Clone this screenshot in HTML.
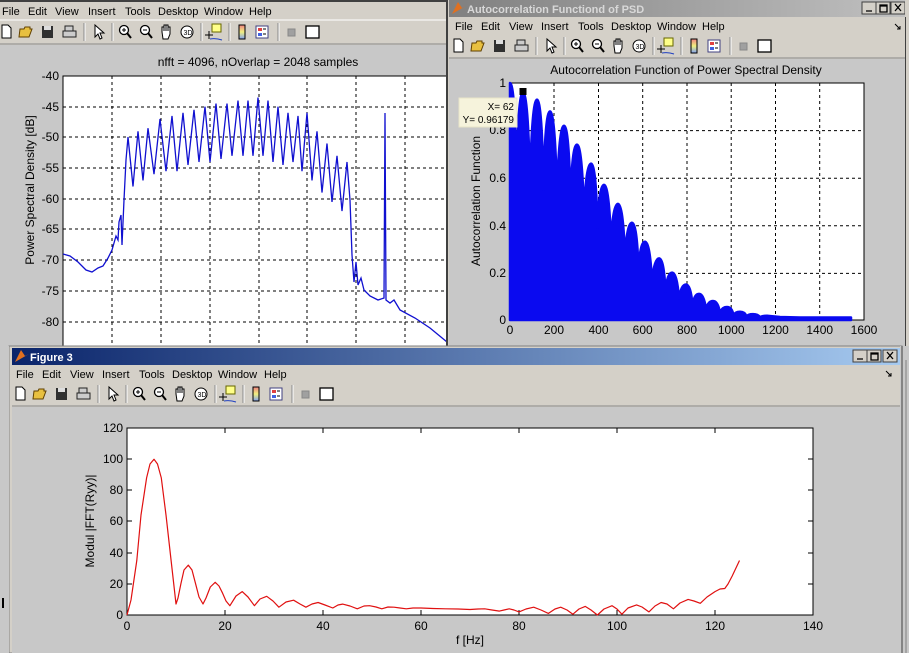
<!DOCTYPE html>
<html><head><meta charset="utf-8"><style>
html,body{margin:0;padding:0;width:909px;height:653px;overflow:hidden;background:#d4d0c8}
svg{display:block}
text{font-family:"Liberation Sans",sans-serif}
</style></head><body>
<svg width="909" height="653" viewBox="0 0 909 653" xmlns="http://www.w3.org/2000/svg">
<defs>
<linearGradient id="act" x1="0" x2="1"><stop offset="0" stop-color="#0a246a"/><stop offset="1" stop-color="#a6caf0"/></linearGradient>
<linearGradient id="ina" x1="0" x2="1"><stop offset="0" stop-color="#808080"/><stop offset="1" stop-color="#c0c0c0"/></linearGradient>
<linearGradient id="cb" x1="0" y1="0" x2="0" y2="1"><stop offset="0" stop-color="#f08080"/><stop offset=".5" stop-color="#f0f080"/><stop offset="1" stop-color="#80a0f0"/></linearGradient>
<g id="tb">
 <path d="M2,-7h6l3,3v10h-9z" fill="#fff" stroke="#000"/>
 <path d="M20,-3h4l1,-2h5v2h2l-3,8h-10z" fill="#e8c040" stroke="#604000"/>
 <rect x="42" y="-6" width="11" height="12" fill="#303030"/><rect x="44" y="-6" width="7" height="4" fill="#ddd"/>
 <path d="M63,-1h13v6h-13z M65,-6h8v5h-8z" fill="#ccc" stroke="#222"/>
 <line x1="84" y1="-9" x2="84" y2="9" stroke="#888"/><line x1="85" y1="-9" x2="85" y2="9" stroke="#fff"/>
 <path d="M95,-7v12l3,-3l2,5l2,-1l-2,-5h4z" fill="#fff" stroke="#000"/>
 <line x1="112" y1="-9" x2="112" y2="9" stroke="#888"/><line x1="113" y1="-9" x2="113" y2="9" stroke="#fff"/>
 <circle cx="124" cy="-2" r="4.5" fill="#fff" stroke="#000" stroke-width="1.3"/><path d="M122,-2h4M124,-4v4" stroke="#000"/><line x1="127" y1="1" x2="131" y2="6" stroke="#000" stroke-width="2"/>
 <circle cx="145" cy="-2" r="4.5" fill="#fff" stroke="#000" stroke-width="1.3"/><path d="M143,-2h4" stroke="#000"/><line x1="148" y1="1" x2="152" y2="6" stroke="#000" stroke-width="2"/>
 <path d="M162,0v-5h2v4v-6h2v6v-6h2v6v-4h2v7l-2,5h-5z" fill="#fff" stroke="#000"/>
 <circle cx="187" cy="0" r="6" fill="#fff" stroke="#000"/><text x="183.5" y="3" font-size="7">3D</text>
 <line x1="201" y1="-9" x2="201" y2="9" stroke="#888"/><line x1="202" y1="-9" x2="202" y2="9" stroke="#fff"/>
 <rect x="212" y="-8" width="9" height="8" fill="#ff8" stroke="#660"/><path d="M205,3h8M209,-1v8" stroke="#000"/><path d="M210,7q6,-1 12,1" stroke="#2040c0" fill="none"/>
 <line x1="229" y1="-9" x2="229" y2="9" stroke="#888"/><line x1="230" y1="-9" x2="230" y2="9" stroke="#fff"/>
 <rect x="239" y="-7" width="6" height="14" fill="url(#cb)" stroke="#000"/>
 <rect x="256" y="-6" width="12" height="12" fill="#fff" stroke="#404080"/><rect x="258" y="-4" width="4" height="3" fill="#e04040"/><rect x="258" y="1" width="4" height="3" fill="#4060e0"/><path d="M263,-3h3M263,2h3" stroke="#000"/>
 <line x1="278" y1="-9" x2="278" y2="9" stroke="#888"/><line x1="279" y1="-9" x2="279" y2="9" stroke="#fff"/>
 <rect x="288" y="-3" width="7" height="7" fill="#a0a0a0" stroke="#888"/>
 <rect x="306" y="-6" width="13" height="12" fill="#fff" stroke="#000" stroke-width="1.3"/>
</g>
</defs>

<!-- ============ WINDOW 1 ============ -->
<rect x="0" y="0" width="448" height="653" fill="#d4d0c8"/>
<rect x="0" y="0" width="448" height="2" fill="#404040"/>
<g font-size="11" fill="#000">
<text x="2" y="15">File</text><text x="28" y="15">Edit</text><text x="55" y="15">View</text><text x="88" y="15">Insert</text><text x="125" y="15">Tools</text><text x="158" y="15">Desktop</text><text x="204" y="15">Window</text><text x="249" y="15">Help</text>
</g>
<line x1="0" y1="20" x2="448" y2="20" stroke="#fff"/>
<use href="#tb" x="0" y="32"/>
<line x1="0" y1="44" x2="448" y2="44" stroke="#888"/>
<rect x="0" y="45" width="446" height="608" fill="#c8c8c8"/>
<text x="258" y="66" font-size="12" text-anchor="middle">nfft = 4096, nOverlap = 2048 samples</text>
<rect x="63" y="76" width="390" height="290" fill="#fff" stroke="#000"/>
<g stroke="#000" stroke-dasharray="3,3" stroke-width="1">
<path d="M112,76V360M161,76V360M210,76V360M259,76V360M307,76V360M356,76V360M405,76V360"/>
<path d="M63,107H447M63,137H447M63,168H447M63,199H447M63,229H447M63,260H447M63,291H447M63,322H447"/>
</g>
<g font-size="12" text-anchor="end">
<text x="59" y="80">-40</text><text x="59" y="111">-45</text><text x="59" y="141">-50</text><text x="59" y="172">-55</text><text x="59" y="203">-60</text><text x="59" y="233">-65</text><text x="59" y="264">-70</text><text x="59" y="295">-75</text><text x="59" y="326">-80</text>
</g>
<text transform="translate(34,190) rotate(-90)" font-size="12" text-anchor="middle">Power Spectral Density [dB]</text>
<polyline fill="none" stroke="#1010d0" stroke-width="1.3" points="63,254 70,256 78,262 86,270 92,272 98,268 103,266 108,258 112,250 116,236 118,240 119,222 121,215 122,245 124,200 126,160 128,137 133,186.5 138,131.3 143,180.4 148,128.2 154,174.2 160,119 166,171.2 172,115.9 177,171.2 183,112.8 188,165 194,109.8 199,162 205,106.7 210,162 216,103.6 221,158.9 227,103.6 232,155.8 238,100.6 243,155.8 248,100.6 253,155.8 258,97.5 263,155.8 268,100.6 273,162 278,106.7 283,165 288,112.8 293,162 298,115.9 302,171.2 307,112.8 312,180.4 317,131.3 322,192.6 327,143.5 332,201.9 337,155.8 342,211.1 347,162 350,200 352,255 354,282 356,262 358,285 361,278 364,290 370,296 378,300 384,298 385,113 386,300 390,303 394,300 400,310 415,318 430,328 447,342"/>
<rect x="446" y="0" width="2" height="653" fill="#404040"/>

<!-- ============ WINDOW 2 ============ -->
<rect x="448" y="0" width="461" height="653" fill="#d4d0c8"/>
<rect x="449" y="0" width="456" height="17" fill="url(#ina)"/>
<path d="M452,14l6,-12l4,6l4,-2z" fill="#e07020"/>
<text x="467" y="13" font-size="11" font-weight="bold" fill="#d8d8d8">Autocorrelation Functiond of PSD</text>
<g fill="#d4d0c8" stroke="#404040"><rect x="862" y="2" width="14" height="12"/><rect x="876" y="2" width="14" height="12"/><rect x="891" y="2" width="14" height="12"/></g>
<path d="M866,11h6M880,5h7v7h-7zM880,6h7M895,4l6,7M901,4l-6,7" stroke="#000" fill="none" stroke-width="1.3"/>
<g font-size="11">
<text x="455" y="30">File</text><text x="481" y="30">Edit</text><text x="509" y="30">View</text><text x="541" y="30">Insert</text><text x="578" y="30">Tools</text><text x="611" y="30">Desktop</text><text x="657" y="30">Window</text><text x="702" y="30">Help</text>
</g>
<path d="M895,24l5,5M897,29h3v-3" stroke="#000" fill="none"/>
<use href="#tb" x="452" y="46"/>
<line x1="449" y1="58" x2="905" y2="58" stroke="#888"/>
<rect x="449" y="59" width="456" height="594" fill="#c8c8c8"/>
<text x="686" y="74" font-size="12" text-anchor="middle">Autocorrelation Function of Power Spectral Density</text>
<rect x="510" y="83" width="354" height="237" fill="#fff" stroke="#000"/>
<g stroke="#000" stroke-dasharray="3,3">
<path d="M554,83V320M598.5,83V320M642.7,83V320M687,83V320M731.2,83V320M775.5,83V320M819.7,83V320"/>
<path d="M510,130.6H864M510,178.2H864M510,225.8H864M510,273.4H864"/>
</g>
<path fill="#0a0af0" stroke="#0a0af0" stroke-width="2.5" stroke-linejoin="round" d="M510,320 L510,83 Q515,83 516.5,177.8 Q518,92.5 523,92.5 Q528,92.5 530,182.5 Q532,99.6 537,99.6 Q542,99.6 543.5,189.6 Q545,111.4 550,111.4 Q555,111.4 557,194.4 Q559,125.7 564,125.7 Q569,125.7 570.5,201.5 Q572,144.6 577,144.6 Q582,144.6 584,213.4 Q586,163.6 591,163.6 Q596,163.6 597.5,227.6 Q599,184.9 604,184.9 Q609,184.9 611,241.8 Q613,203.9 618,203.9 Q623,203.9 625,256 Q627,222.8 632,222.8 Q637,222.8 638.5,270.2 Q640,241.8 645,241.8 Q650,241.8 652,282.1 Q654,258.4 659,258.4 Q664,258.4 665.5,291.6 Q667,272.6 672,272.6 Q677,272.6 679,298.7 Q681,284.5 686,284.5 Q691,284.5 692.5,305.8 Q694,293.9 699,293.9 Q704,293.9 706,309.3 Q708,301 713,301 Q718,301 720,312.9 Q722,307 727,307 Q732,307 733.5,315.3 Q735,311.7 740,311.7 Q745,311.7 746.5,316.4 Q748,314.1 753,314.1 Q758,314.1 760,317.2 Q762,315.7 767,315.7 L780,317 L800,317.5 L851,317.5 L851,320 Z"/>
<g font-size="12" text-anchor="end">
<text x="506" y="87">1</text><text x="506" y="134">0.8</text><text x="506" y="182">0.6</text><text x="506" y="230">0.4</text><text x="506" y="277">0.2</text><text x="506" y="324">0</text>
</g>
<g font-size="12" text-anchor="middle">
<text x="510" y="334">0</text><text x="554" y="334">200</text><text x="598.5" y="334">400</text><text x="642.7" y="334">600</text><text x="687" y="334">800</text><text x="731.2" y="334">1000</text><text x="775.5" y="334">1200</text><text x="819.7" y="334">1400</text><text x="864" y="334">1600</text>
</g>
<text transform="translate(480,201) rotate(-90)" font-size="12" text-anchor="middle">Autocorrelation Function</text>
<rect x="459" y="98" width="58" height="29" fill="#f6f3dc" stroke="#e8e4c8"/>
<g font-size="10" text-anchor="end"><text x="514" y="110">X= 62</text><text x="514" y="123">Y= 0.96179</text></g>
<rect x="519.5" y="88" width="7" height="7" fill="#000"/>
<rect x="905" y="0" width="4" height="653" fill="#d4d0c8"/><line x1="905.5" y1="17" x2="905.5" y2="653" stroke="#404040"/>

<!-- ============ WINDOW 3 ============ -->
<rect x="9" y="346" width="893" height="307" fill="#d4d0c8" stroke="#808080"/>
<rect x="12" y="348" width="888" height="17" fill="url(#act)"/>
<path d="M15,362l6,-12l4,6l4,-2z" fill="#e07020"/>
<text x="30" y="361" font-size="11" font-weight="bold" fill="#fff">Figure 3</text>
<g fill="#d4d0c8" stroke="#404040"><rect x="853" y="350" width="14" height="12"/><rect x="867" y="350" width="14" height="12"/><rect x="883" y="350" width="14" height="12"/></g>
<path d="M857,359h6M871,353h7v7h-7zM871,354h7M887,352l6,7M893,352l-6,7" stroke="#000" fill="none" stroke-width="1.3"/>
<g font-size="11">
<text x="16" y="378">File</text><text x="42" y="378">Edit</text><text x="70" y="378">View</text><text x="102" y="378">Insert</text><text x="139" y="378">Tools</text><text x="172" y="378">Desktop</text><text x="218" y="378">Window</text><text x="264" y="378">Help</text>
</g>
<path d="M886,371l5,5M888,376h3v-3" stroke="#000" fill="none"/>
<use href="#tb" x="14" y="394"/>
<line x1="12" y1="406" x2="900" y2="406" stroke="#888"/>
<rect x="12" y="407" width="888" height="246" fill="#c8c8c8"/>
<rect x="127" y="428" width="686" height="187" fill="#fff" stroke="#000"/>
<g stroke="#000">
<path d="M225,615v-5M323,615v-5M421,615v-5M519,615v-5M617,615v-5M715,615v-5"/>
<path d="M225,428v5M323,428v5M421,428v5M519,428v5M617,428v5M715,428v5"/>
<path d="M127,584h5M127,553h5M127,521h5M127,490h5M127,459h5"/>
<path d="M813,584h-5M813,553h-5M813,521h-5M813,490h-5M813,459h-5"/>
</g>
<g font-size="12" text-anchor="end">
<text x="123" y="432">120</text><text x="123" y="463">100</text><text x="123" y="494">80</text><text x="123" y="525">60</text><text x="123" y="557">40</text><text x="123" y="588">20</text><text x="123" y="619">0</text>
</g>
<g font-size="12" text-anchor="middle">
<text x="127" y="630">0</text><text x="225" y="630">20</text><text x="323" y="630">40</text><text x="421" y="630">60</text><text x="519" y="630">80</text><text x="617" y="630">100</text><text x="715" y="630">120</text><text x="813" y="630">140</text>
</g>
<text x="470" y="644" font-size="12" text-anchor="middle">f [Hz]</text>
<text transform="translate(94,521) rotate(-90)" font-size="12" text-anchor="middle">Modul |FFT(Ryy)|</text>
<polyline fill="none" stroke="#e01010" stroke-width="1.2" stroke-linejoin="round" points="127,615 131,600 136.8,560.5 141,515 146.6,477.9 150,464 154,459.2 157.5,464 161.3,477.9 166,515 171.1,560.5 176,604 178,598 180.9,583.8 184,570 188.3,565.1 192,570 195.6,583.8 199,597 203,604 206,598 210.3,587 215.2,582.3 219,586 222.6,593.2 226,601 229.9,605.7 236,596 242.2,591.6 248,597 254.4,605.7 260,599 266.7,596.3 273,601 278.9,607.2 286,602 293.6,600.2 300,604 305.9,607.2 312,604 318.1,602.5 325,605 332.8,608 338,605 342.6,604.1 350,606 357.3,608.8 364,606 369.6,605.7 376,607 381.8,608.8 388,607 394,607.2 400,608 406.3,608.8 413,608 421,608 433,608.5 445.5,608.8 458,609 470,609.5 478,609 484.7,608.8 492,610 499.4,611.1 504,610 509.2,608.8 514,610 519,611.9 526,609 533.7,607.2 541,610 548.4,613.4 555,609 560.7,607.2 567,610 572.9,614.2 579,609 585.2,606.4 591,610 597.4,615 604,609 612.1,605.7 617,609 621.9,614.2 628,608 636.6,604.9 642,607 648.9,611.9 655,606 661.1,602.5 667,604 673.4,608.8 680,603 688.1,599.4 694,601 700.3,603.3 707,597 715,591.6 720,589 724.8,588.5 728,584 732.2,576 739.5,560.5"/>
<rect x="900" y="346" width="9" height="307" fill="#c8c8c8"/>
<line x1="902" y1="346" x2="902" y2="653" stroke="#404040"/>
<line x1="906" y1="360" x2="906" y2="653" stroke="#808080"/>
<rect x="0" y="346" width="9" height="307" fill="#c8c8c8"/>
<line x1="3" y1="598" x2="3" y2="608" stroke="#000" stroke-width="2"/>
</svg>
</body></html>
